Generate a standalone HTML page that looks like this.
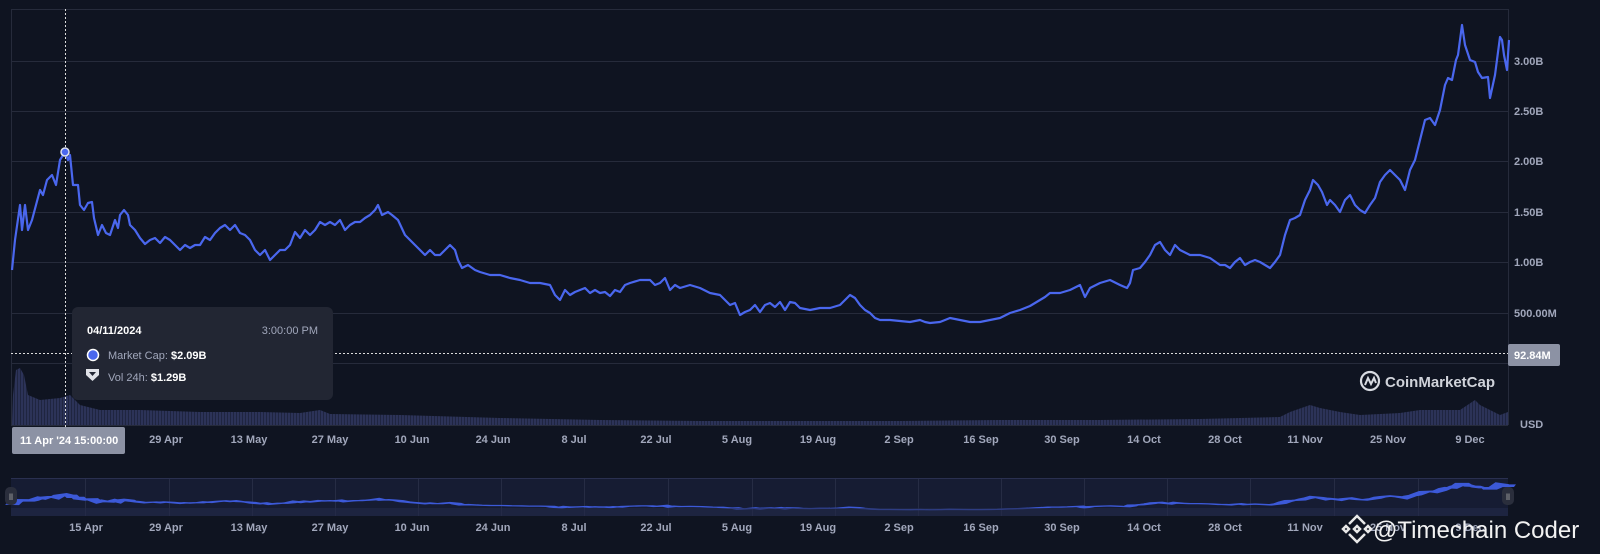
<!DOCTYPE html>
<html><head><meta charset="utf-8"><style>
html,body{margin:0;padding:0;background:#0f1421;}
svg{display:block;font-family:"Liberation Sans",Arial,sans-serif;}
</style></head><body>
<svg width="1600" height="554" viewBox="0 0 1600 554" xmlns="http://www.w3.org/2000/svg">
<defs>
<pattern id="bars" width="3" height="10" patternUnits="userSpaceOnUse"><rect width="2" height="10" fill="#2c3358"/><rect x="2" width="1" height="10" fill="#1f2540"/></pattern>
<polyline id="ln" fill="none" points="12,270 15,240 20,205 22,230 25,205 28,230 32,220 36,205 40,190 43,195 47,180 52,175 56,185 60,160 65,152 68,160 70,155 73,185 78,185 80,205 84,210 88,203 92,202 94,218 98,235 102,225 106,233 110,235 115,220 118,228 120,215 124,210 128,215 130,225 135,230 140,238 145,244 150,240 155,238 160,243 165,237 170,240 175,245 180,250 185,245 190,248 195,245 200,245 205,237 210,240 215,233 220,228 225,225 230,230 235,225 240,233 245,235 250,240 255,250 260,255 265,250 270,260 275,255 280,250 285,250 290,245 295,232 300,238 305,230 310,235 315,230 320,222 325,225 330,222 335,225 340,220 345,230 350,225 355,222 360,222 365,218 370,215 375,210 378,205 382,215 388,212 392,215 398,220 405,235 410,240 415,245 420,250 425,255 430,250 435,255 440,255 445,250 450,245 455,250 458,260 462,268 468,265 475,270 480,272 490,275 500,275 510,278 520,280 530,283 540,283 550,285 555,295 560,300 565,290 570,295 575,292 580,290 585,288 590,293 595,290 600,293 605,292 610,296 615,290 620,292 625,285 630,283 640,280 650,280 655,285 660,283 665,278 670,290 675,285 680,288 690,285 700,288 710,293 720,295 730,305 735,303 740,315 745,312 750,310 755,305 760,312 765,305 770,303 775,307 780,302 785,310 790,302 795,303 800,308 810,310 820,308 830,308 840,305 845,300 850,295 855,298 860,305 865,310 870,313 875,318 880,320 890,320 900,321 910,322 920,320 925,322 930,323 940,322 950,318 960,320 970,322 980,322 990,320 1000,318 1010,313 1020,310 1030,306 1040,300 1045,297 1050,293 1060,293 1070,290 1080,285 1085,297 1090,288 1100,283 1110,280 1120,285 1127,288 1130,283 1133,270 1140,268 1145,262 1150,255 1155,245 1160,242 1165,250 1170,255 1175,245 1180,250 1190,255 1200,255 1210,258 1220,265 1225,265 1230,268 1235,262 1240,258 1245,265 1250,262 1255,260 1260,262 1265,265 1270,268 1275,262 1280,255 1285,235 1290,220 1295,218 1300,215 1305,200 1310,190 1313,180 1318,185 1322,192 1327,205 1330,200 1335,205 1340,212 1345,200 1350,195 1355,205 1360,210 1365,213 1370,205 1375,198 1380,182 1385,175 1390,170 1395,175 1400,180 1405,190 1410,170 1415,160 1420,140 1425,120 1430,118 1435,125 1440,110 1445,85 1448,78 1452,80 1456,60 1458,55 1462,25 1465,45 1470,60 1475,62 1478,72 1482,78 1488,77 1490,98 1495,75 1500,37 1502,40 1504,55 1507,70 1509,40"/>
</defs>
<rect width="1600" height="554" fill="#0f1421"/>
<g stroke="#262b3b" stroke-width="1">
<line x1="11" y1="9.5" x2="1508" y2="9.5"/>
<line x1="11" y1="61.5" x2="1508" y2="61.5"/>
<line x1="11" y1="111.5" x2="1508" y2="111.5"/>
<line x1="11" y1="161.5" x2="1508" y2="161.5"/>
<line x1="11" y1="212.5" x2="1508" y2="212.5"/>
<line x1="11" y1="262.5" x2="1508" y2="262.5"/>
<line x1="11" y1="313.5" x2="1508" y2="313.5"/>
<line x1="11" y1="363.5" x2="1508" y2="363.5"/>
<line x1="11.5" y1="9" x2="11.5" y2="425"/>
<line x1="1508.5" y1="9" x2="1508.5" y2="425"/>
<line x1="11" y1="425.5" x2="1508" y2="425.5"/>
</g>
<polygon fill="url(#bars)" points="12,425 13,395 16,370 20,368 24,375 28,395 40,400 60,398 70,395 80,405 100,410 140,410 200,412 260,412 300,413 320,410 330,414 400,415 500,418 600,420 700,421 800,421 900,421 1000,420 1100,420 1200,419 1280,417 1290,412 1310,405 1320,408 1340,412 1360,415 1400,413 1420,410 1440,410 1460,410 1475,400 1480,405 1490,410 1500,415 1508,412 1508,425"/>
<use href="#ln" stroke="#4a67ee" stroke-width="2.2" stroke-linejoin="round"/>
<line x1="65.5" y1="9" x2="65.5" y2="428" stroke="#ddd" stroke-width="1" stroke-dasharray="2,2"/>
<line x1="11" y1="353.5" x2="1508" y2="353.5" stroke="#ddd" stroke-width="1" stroke-dasharray="2,2"/>
<circle cx="65" cy="152" r="4" fill="#4a67ee" stroke="#dfe3f0" stroke-width="1.5"/>
<g fill="#a1a7bb" font-size="11" font-weight="bold">
<text x="1514" y="65">3.00B</text>
<text x="1514" y="115">2.50B</text>
<text x="1514" y="165">2.00B</text>
<text x="1514" y="216">1.50B</text>
<text x="1514" y="266">1.00B</text>
<text x="1514" y="317">500.00M</text>
<text x="1520" y="428">USD</text>
</g>
<rect x="1508" y="344" width="52" height="22" rx="2" fill="#8c92a4"/>
<text x="1514" y="359" fill="#fff" font-size="11" font-weight="bold">92.84M</text>
<g transform="translate(1370,381)" fill="none" stroke="#d8dbe2" stroke-width="2.2">
<circle cx="0" cy="0" r="9"/>
<path d="M-5,4 L-2,-3 L1,3 L4,-3 L6,2" stroke-width="2"/>
</g>
<text x="1385" y="387" fill="#d0d3da" font-size="15" font-weight="bold">CoinMarketCap</text>
<g fill="#a1a7bb" font-size="11" font-weight="bold" text-anchor="middle">
<text x="166" y="443">29 Apr</text>
<text x="249" y="443">13 May</text>
<text x="330" y="443">27 May</text>
<text x="412" y="443">10 Jun</text>
<text x="493" y="443">24 Jun</text>
<text x="574" y="443">8 Jul</text>
<text x="656" y="443">22 Jul</text>
<text x="737" y="443">5 Aug</text>
<text x="818" y="443">19 Aug</text>
<text x="899" y="443">2 Sep</text>
<text x="981" y="443">16 Sep</text>
<text x="1062" y="443">30 Sep</text>
<text x="1144" y="443">14 Oct</text>
<text x="1225" y="443">28 Oct</text>
<text x="1305" y="443">11 Nov</text>
<text x="1388" y="443">25 Nov</text>
<text x="1470" y="443">9 Dec</text>
</g>
<rect x="12" y="427" width="113" height="27" rx="2" fill="#8c92a4"/>
<text x="20" y="444" fill="#fff" font-size="11" font-weight="bold">11 Apr '24 15:00:00</text>
<rect x="72" y="307" width="261" height="93" rx="6" fill="#222633"/>
<text x="87" y="334" fill="#fff" font-size="11" font-weight="bold">04/11/2024</text>
<text x="318" y="334" fill="#a1a7bb" font-size="11" text-anchor="end">3:00:00 PM</text>
<circle cx="93" cy="355" r="5.5" fill="#4a67ee" stroke="#fff" stroke-width="1.5"/>
<text x="108" y="359" fill="#a1a7bb" font-size="11">Market Cap: <tspan fill="#fff" font-weight="bold">$2.09B</tspan></text>
<path d="M86,369 H99 V375 L92.5,381 L86,375 Z" fill="#e0e2e8"/>
<path d="M89,372 H96 L92.5,376 Z" fill="#222633"/>
<text x="108" y="381" fill="#a1a7bb" font-size="11">Vol 24h: <tspan fill="#fff" font-weight="bold">$1.29B</tspan></text>
<rect x="11" y="478" width="1497" height="38" fill="#161c33"/>
<g stroke="#262c44"><line x1="85.5" y1="478" x2="85.5" y2="516"/><line x1="169.5" y1="478" x2="169.5" y2="516"/><line x1="252.5" y1="478" x2="252.5" y2="516"/><line x1="335.5" y1="478" x2="335.5" y2="516"/><line x1="418.5" y1="478" x2="418.5" y2="516"/><line x1="501.5" y1="478" x2="501.5" y2="516"/><line x1="584.5" y1="478" x2="584.5" y2="516"/><line x1="668.5" y1="478" x2="668.5" y2="516"/><line x1="752.5" y1="478" x2="752.5" y2="516"/><line x1="835.5" y1="478" x2="835.5" y2="516"/><line x1="918.5" y1="478" x2="918.5" y2="516"/><line x1="1001.5" y1="478" x2="1001.5" y2="516"/><line x1="1084.5" y1="478" x2="1084.5" y2="516"/><line x1="1167.5" y1="478" x2="1167.5" y2="516"/><line x1="1250.5" y1="478" x2="1250.5" y2="516"/><line x1="1334.5" y1="478" x2="1334.5" y2="516"/><line x1="1418.5" y1="478" x2="1418.5" y2="516"/></g>
<rect x="11" y="478" width="1497" height="1" fill="#2a3050"/>
<g transform="translate(0,480.7) scale(1,0.09)">
<use href="#ln" stroke="#3c59d8" stroke-width="14"/>
</g>
<rect x="11" y="508" width="1497" height="8" fill="#232a4a" opacity="0.6"/>
<rect x="5" y="487" width="12" height="18" rx="5" fill="#2a2e3c"/>
<text x="11" y="500" fill="#aaa" font-size="9" text-anchor="middle">ll</text>
<rect x="1502" y="487" width="12" height="18" rx="5" fill="#2a2e3c"/>
<text x="1508" y="500" fill="#aaa" font-size="9" text-anchor="middle">ll</text>
<g fill="#a1a7bb" font-size="11" font-weight="bold" text-anchor="middle">
<text x="86" y="531">15 Apr</text><text x="166" y="531">29 Apr</text><text x="249" y="531">13 May</text><text x="330" y="531">27 May</text><text x="412" y="531">10 Jun</text><text x="493" y="531">24 Jun</text><text x="574" y="531">8 Jul</text><text x="656" y="531">22 Jul</text><text x="737" y="531">5 Aug</text><text x="818" y="531">19 Aug</text><text x="899" y="531">2 Sep</text><text x="981" y="531">16 Sep</text><text x="1062" y="531">30 Sep</text><text x="1144" y="531">14 Oct</text><text x="1225" y="531">28 Oct</text><text x="1305" y="531">11 Nov</text><text x="1388" y="531">25 Nov</text><text x="1470" y="531">9 Dec</text>
</g>
<g transform="translate(1357,529)" fill="none" stroke="#e8e8e8" stroke-width="2.5">
<path d="M-8,-5 L0,-13 L8,-5"/><path d="M-8,5 L0,13 L8,5"/><path d="M-3,0 L0,-3 L3,0 L0,3 Z"/><path d="M-14,0 L-11,-3 L-8,0 L-11,3Z"/><path d="M8,0 L11,-3 L14,0 L11,3Z"/>
</g>
<text x="1373" y="538" fill="#f2f2f2" font-size="24">@Timechain Coder</text>
</svg>
</body></html>
